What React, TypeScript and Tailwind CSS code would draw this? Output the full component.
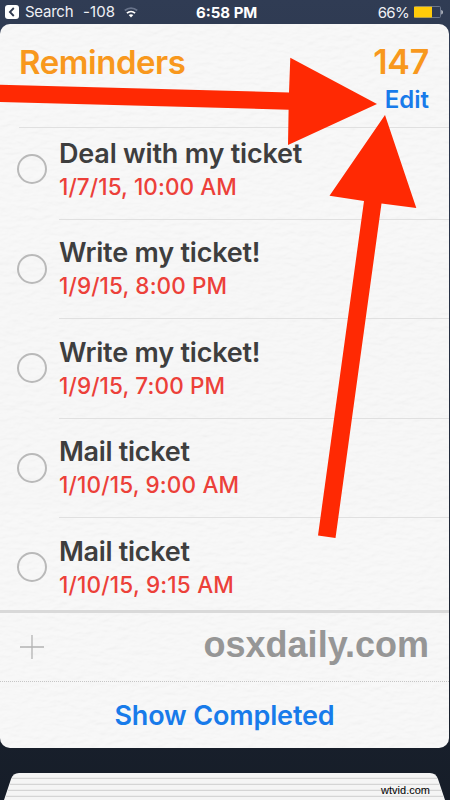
const reminders = [
  { title: "Deal with my ticket", date: "1/7/15, 10:00 AM", height: "h-[92px]", titleGap: "tracking-[-0.2px]", dateGap: "tracking-[0.1px]" },
  { title: "Write my ticket!", date: "1/9/15, 8:00 PM", height: "h-[99.5px]", titleGap: "tracking-[-0.2px]", dateGap: "tracking-[0.12px]" },
  { title: "Write my ticket!", date: "1/9/15, 7:00 PM", height: "h-[99.5px]", titleGap: "tracking-[-0.2px]", dateGap: "tracking-[0.12px]" },
  { title: "Mail ticket", date: "1/10/15, 9:00 AM", height: "h-[99.5px]", titleGap: "tracking-[-0.3px]", dateGap: "tracking-[0.16px]" },
  { title: "Mail ticket", date: "1/10/15, 9:15 AM", height: "h-[99.5px]", titleGap: "tracking-[-0.3px]", dateGap: "tracking-[0.2px]" },
];

function StatusBar() {
  return (
    <div className="flex h-6 shrink-0 items-center pl-[5px] pr-[7px] text-[15px] leading-6 text-[#eef0f5]">
      <div className="flex w-[191px] items-center">
        <svg className="h-[14px] w-[14px]" viewBox="0 0 14 14">
          <rect width="14" height="14" rx="3" fill="#fff" />
          <path d="M8.8 3 4.9 7l3.9 4" fill="none" stroke="#303a4f" strokeWidth="1.8" />
        </svg>
        <span className="ml-[6px] w-[58px] tracking-[-0.25px]">Search</span>
        <span className="w-[41px] tracking-[0.1px]">-108</span>
        <svg className="h-[11px] w-[14px]" viewBox="0 0 14 11" fill="none">
          <path d="M.8 3.5C4.4.3 9.6.3 13.2 3.5" stroke="#68738a" strokeWidth="1.7" />
          <path d="M2.9 6.1c2.4-2.1 5.8-2.1 8.2 0" stroke="#fff" strokeWidth="1.7" />
          <path d="M4.7 8.1c1.4-1.2 3.2-1.2 4.6 0L7 10.6Z" fill="#fff" />
        </svg>
      </div>
      <span className="pt-px font-bold text-white">6:58 PM</span>
      <div className="ml-auto flex items-center">
        <span className="pt-px tracking-[-0.7px]">66%</span>
        <svg className="ml-[5px] h-3 w-[29px]" viewBox="0 0 29 12">
          <rect x=".5" y=".5" width="26" height="11" rx="1" fill="none" stroke="#7c879c" strokeWidth=".8" />
          <rect x="0" y="0.7" width="18" height="10.8" fill="#ffcb09" />
          <path d="M27.5 4v4.5c1.5-.5 1.5-4 0-4.5Z" fill="#fff" />
        </svg>
      </div>
    </div>
  );
}

function PaperTexture() {
  return (
    <svg className="pointer-events-none absolute inset-0 h-full w-full opacity-15">
      <filter id="paper" x="0" y="0" width="100%" height="100%">
        <feTurbulence type="fractalNoise" baseFrequency="0.09 0.2" numOctaves="3" seed="4" />
        <feDiffuseLighting lightingColor="#ffffff" surfaceScale="1.1">
          <feDistantLight azimuth="70" elevation="65" />
        </feDiffuseLighting>
      </filter>
      <rect width="100%" height="100%" filter="url(#paper)" />
    </svg>
  );
}

function Arrows() {
  return (
    <svg className="pointer-events-none absolute left-0 top-0 h-[800px] w-[450px]" viewBox="0 0 450 800" fill="#ff2903">
      <path d="M0 84.7 289 92.5 290.3 57.7 377 104 288 145 288.6 109.7 0 102Z" />
      <path d="M385 115 416.3 208 381.5 203.5 335.5 538 318 535.5 364 201 329.5 195.8Z" />
    </svg>
  );
}

export default function App() {
  return (
    <div className="relative flex h-[800px] w-[450px] flex-col overflow-hidden bg-linear-to-b from-[#303c54] to-[#161d28] font-['Inter','Liberation_Sans',sans-serif]">
      <StatusBar />
      <main className="relative mr-px flex h-[724px] shrink-0 flex-col overflow-hidden rounded-[10px] bg-[#f7f7f7]">
        <PaperTexture />
        <header className="relative ml-[19px] flex h-[103.5px] shrink-0 justify-between border-b border-[#e0e0e0] pr-[20px] pt-[18px]">
          <h1 className="text-[33px] font-semibold leading-10 tracking-[-0.45px] text-[#f8981d]">Reminders</h1>
          <div className="flex flex-col items-end">
            <span className="text-[34px] font-semibold leading-10 tracking-[-0.3px] text-[#f8981d]">147</span>
            <span className="mt-px text-[24px] font-semibold leading-[34px] text-[#187bea]">Edit</span>
          </div>
        </header>
        <ul className="relative shrink-0">
          {reminders.map((r, i) => (
            <li key={i} className={`group flex items-end pl-[17px] ${r.height}`}>
              <span className="mb-[35.5px] h-[30px] w-[30px] shrink-0 rounded-full border-2 border-[#b9b9b9]" />
              <div className="ml-3 h-[82px] flex-1 border-b border-[#e0e0e0] group-last:border-transparent">
                <div className={`whitespace-nowrap text-[27px] font-semibold leading-8 text-[#3e3e3e] ${r.titleGap}`}>{r.title}</div>
                <div className={`mt-[3px] whitespace-nowrap text-[22.5px] font-medium leading-7 text-[#ec4039] ${r.dateGap}`}>{r.date}</div>
              </div>
            </li>
          ))}
        </ul>
        <div className="relative -mt-[8px] flex h-[71px] shrink-0 items-center justify-between border-t-[3px] border-[#d9d9d9] px-[20px]">
          <svg className="h-6 w-6" viewBox="0 0 24 24">
            <path d="M0 12h24M12 0v24" stroke="#b3b3b3" strokeWidth="1.3" />
          </svg>
          <span className="-mt-[4px] font-['Liberation_Sans',sans-serif] text-[36px] font-bold leading-10 text-[#969696]">osxdaily.com</span>
        </div>
        <button className="relative flex flex-1 items-center justify-center border-t border-dotted border-[#c6c6c6] pt-[2px] text-[27px] font-semibold tracking-[-0.15px] text-[#187bea]">
          Show Completed
        </button>
      </main>
      <div className="relative mt-6 h-7 shrink-0">
        <svg className="absolute inset-0 h-full w-full" viewBox="0 0 450 28">
          <path d="M4 28 11 7Q13 1 19 1H430Q436 1 438 7L445 28Z" fill="#f5f5f5" />
          <path d="M12 6.3H437M10 12.3H439M8 18.3H441M6 24.3H443" stroke="#cecece" />
        </svg>
        <span className="absolute right-[20px] top-[10px] font-['Liberation_Sans',sans-serif] text-[11px] leading-4 text-black">wtvid.com</span>
      </div>
      <Arrows />
    </div>
  );
}
